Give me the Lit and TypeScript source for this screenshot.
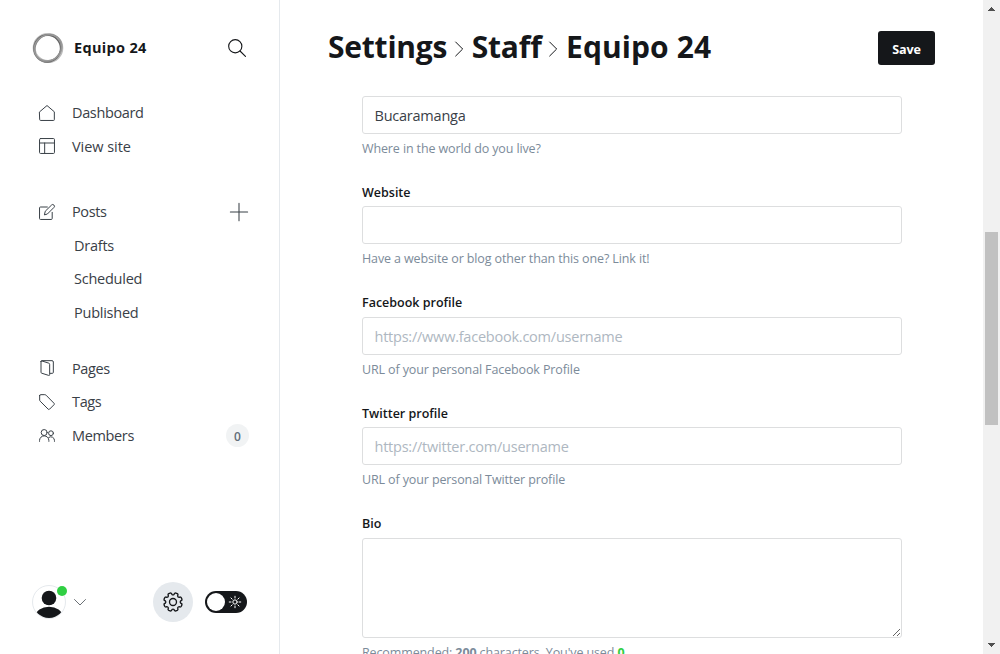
import { LitElement, html, svg, css, nothing } from "lit";
import { customElement } from "lit/decorators.js";

const cog = (() => {
  const pts: string[] = [];
  for (let i = 0; i < 8; i++) {
    const base = (i * Math.PI) / 4 + Math.PI / 8;
    const at = (r: number, a: number) => `${(12 + r * Math.sin(base + a)).toFixed(2)} ${(12 - r * Math.cos(base + a)).toFixed(2)}`;
    pts.push(`${i ? "L" : "M"}${at(9.2, -0.25)}Q${at(11.3, -0.23)} ${at(11.2, -0.08)}L${at(11.2, 0.08)}Q${at(11.3, 0.23)} ${at(9.2, 0.25)}Q${at(8.1, 0.3927)} ${at(9.2, 0.535)}`);
  }
  return pts.join("") + "Z";
})();

const icons: Record<string, unknown> = {
  home: svg`<path d="M1 10.2 12 .8l11 9.4V22a1.2 1.2 0 0 1-1.2 1.2H2.2A1.2 1.2 0 0 1 1 22z"/>`,
  layout: svg`<rect x=".8" y=".8" width="22.4" height="22.4" rx="1.5"/><path d="M.8 7.5h22.4M8.5 7.5v15.7"/>`,
  pen: svg`<path d="M12.5 4.5H2.2A1.4 1.4 0 0 0 .8 5.9v15.9a1.4 1.4 0 0 0 1.4 1.4h16.2a1.4 1.4 0 0 0 1.4-1.4V12.5M8.2 15.8l1.2-5L18.8 1.6a2.5 2.5 0 0 1 3.6 3.6L13 14.6z"/>`,
  pages: svg`<path d="M4.200 1h15.300a2 2 0 0 1 2 2v15.500a1.500 1.500 0 0 1-1.500 1.500h-3M3 2.200v16.300q0 1 1 1.300l10.500 3.300q1.500.4 1.500-1V6.500q0-1.300-1.200-1.700L4 1.300Q3 1 3 2.200z"/>`,
  tag: svg`<path d="M1 2.200V9q0 1 .8 1.800l12 12q1 1 2 0l6.800-6.800q1-1 0-2l-12-12.200Q9.800 1 8.700 1H2.200Q1 1 1 2.200z"/>`,
  members: svg`<circle cx="7.800" cy="8.300" r="4.500"/><circle cx="18" cy="9.300" r="3.600"/><path d="M.8 21.500v-1.200a7 7 0 0 1 14 0v1.200M14.500 15.700a5.500 5.500 0 0 1 8.700 4.500v1.300"/>`,
  plus: svg`<path d="M12 .5v23M.5 12h23"/>`,
  search: svg`<circle cx="9.700" cy="9.700" r="8.800"/><path d="m16 16 7.300 7.300"/>`,
  cog: svg`<circle cx="12" cy="12" r="4.200"/><path d=${cog}/>`,
  sun: svg`<circle cx="12" cy="12" r="4.300"/><path d="M12 .5v3.500M12 20v3.500M.5 12H4M20 12h3.500M3.900 3.900l2.400 2.400M17.700 17.700l2.400 2.400M3.900 20.100l2.400-2.400M17.700 6.300l2.400-2.400"/>`,
  right: svg`<path d="M7 1.500 17.500 12 7 22.500"/>`,
  down: svg`<path d="M1 7l11 11L23 7"/>`,
};

const icon = (name: string, cls = "") =>
  html`<svg class="icon ${cls}" viewBox="0 0 24 24" aria-hidden="true">${icons[name]}</svg>`;

@customElement("app-root")
export class AppRoot extends LitElement {
  static styles = css`
    :host { display: flex; height: 654px; overflow: hidden; background: #fff; color: #15171a; font-family: "Open Sans", "Noto Sans", sans-serif; }
    * { box-sizing: border-box; }
    .icon { display: block; width: 16px; height: 16px; fill: none; stroke: #394047; stroke-width: 1.5; stroke-linecap: round; stroke-linejoin: round; flex: none; overflow: visible; }
    .side { width: 280px; flex: none; border-right: 1px solid #e5e9ed; display: flex; flex-direction: column; }
    .brand { height: 96px; display: flex; align-items: center; padding: 0 33px 0 32px; }
    .logo { width: 32px; height: 32px; margin-right: 10px; fill: none; }
    .name { flex: 1; font-size: 14.5px; font-weight: 700; letter-spacing: 0.32px; padding-bottom: 2px; }
    .search { width: 18px; height: 18px; stroke: #15171a; stroke-width: 1.5; }
    .group { display: flex; flex-direction: column; margin-bottom: 32px; }
    .group.posts { margin-bottom: 22.5px; }
    .row { height: 33.5px; display: flex; align-items: center; padding: 0 31px 0 39px; font-size: 14.5px; letter-spacing: -0.36px; color: #394047; }
    .row .text { flex: 1; margin-left: 17px; }
    .row .wide { letter-spacing: -0.05px; }
    .sub { padding-left: 74px; }
    .sub .text { margin-left: 0; letter-spacing: -0.24px; }
    .plus { width: 18px; height: 18px; stroke-width: 1.4; }
    .count { width: 23px; height: 23px; margin-right: -1px; border-radius: 50%; background: #f1f3f4; display: grid; place-items: center; padding-top: 2px; font-size: 12px; font-weight: 600; letter-spacing: 0; color: #626d79; }
    .foot { margin-top: auto; height: 104px; padding: 0 32px; display: flex; align-items: center; }
    .avatar { width: 35px; height: 35px; flex: none; overflow: visible; }
    .down { width: 12px; height: 12px; margin-left: 7px; }
    .gear { width: 40px; height: 40px; margin-left: auto; border-radius: 50%; background: #e5e9ed; display: grid; place-items: center; }
    .cog { width: 20px; height: 20px; stroke: #15171a; stroke-width: 1.6; }
    .toggle { width: 42px; height: 22px; border-radius: 11px; background: #15171a; margin-left: 12px; padding: 0 6px 0 2px; display: flex; align-items: center; justify-content: space-between; }
    .knob { width: 18px; height: 18px; border-radius: 50%; background: #fff; }
    .sun { width: 12px; height: 12px; stroke: #fff; stroke-width: 2; }
    .main { flex: 1; min-width: 0; }
    .head { height: 96px; display: flex; align-items: center; padding: 0 48px; }
    .title { margin: 0; flex: 1; display: flex; align-items: center; padding-bottom: 3px; font-size: 30px; font-weight: 700; letter-spacing: -0.22px; white-space: nowrap; }
    .last { letter-spacing: 0.08px; }
    .chev { width: 16px; height: 16px; margin: 5px 5px 0 3.5px; stroke: #15171a; }
    .save { border: 0; border-radius: 3px; background: #15171a; color: #fff; width: 57px; height: 34px; font: 700 12.6px "Open Sans", sans-serif; letter-spacing: -0.1px; padding: 2px 0 0; }
    .form { padding: 0 81px 0 82px; }
    .field { margin-bottom: 16px; font-size: 12.5px; }
    .label { display: block; height: 28.4px; padding-top: 1px; line-height: 28.4px; font-weight: 600; letter-spacing: 0; }
    .help { height: 28px; line-height: 30px; color: #7c8b9a; letter-spacing: -0.12px; }
    .input { display: block; width: 540px; height: 38px; border: 1px solid #dddedf; border-radius: 3px; padding: 1px 11.5px 0; background: #fff; color: #394047; font: 400 14.5px "Open Sans", sans-serif; letter-spacing: -0.23px; outline: 0; }
    .input::placeholder { color: #aeb7c1; opacity: 1; }
    .area { height: 100px; }
    .used { color: #30cf43; }
    .bar { width: 17px; flex: none; background: #f1f1f1; display: flex; flex-direction: column; align-items: center; }
    .arrow { width: 17px; height: 17px; fill: #505050; }
    .thumb { width: 13px; height: 193px; margin-top: 215px; background: #c1c1c1; }
    .end { margin-top: auto; transform: scaleY(-1); }
  `;

  private row(name: string, label: string, extra: unknown = nothing) {
    return html`<div class="row">${icon(name)}<span class="text ${label === "View site" ? "wide" : ""}">${label}</span>${extra}</div>`;
  }

  private field(label: string, value: string, placeholder: string, help: string) {
    return html`<div class="field">
      ${label ? html`<label class="label">${label}</label>` : nothing}
      <input class="input" .value=${value} placeholder=${placeholder}>
      <div class="help">${help}</div>
    </div>`;
  }

  render() {
    const arrow = svg`<path d="M5 11h7v-1h-1V9h-1V8H9V7H8v1H7v1H6v1H5z"/>`;
    return html`
      <nav class="side">
        <div class="brand">
          <svg class="logo" viewBox="0 0 32 32">
            <ellipse cx="16" cy="16" rx="13.800" ry="13.600" stroke="#bbb" stroke-width="3"/>
            <ellipse cx="15.200" cy="16.500" rx="13.300" ry="13.500" stroke="#666" stroke-width="1.300"/>
            <ellipse cx="16" cy="16" rx="12.400" ry="14.200" stroke="#8a8a8a" stroke-width="1.300" transform="rotate(40 16 16)"/>
            <ellipse cx="16.200" cy="15.800" rx="14.200" ry="12.700" stroke="#999" stroke-width="1.100" transform="rotate(-25 16 16)"/>
          </svg>
          <span class="name">Equipo 24</span>${icon("search", "search")}
        </div>
        <div class="group">${this.row("home", "Dashboard")}${this.row("layout", "View site")}</div>
        <div class="group posts">
          ${this.row("pen", "Posts", icon("plus", "plus"))}
          ${["Drafts", "Scheduled", "Published"].map((t) => html`<div class="row sub"><span class="text">${t}</span></div>`)}
        </div>
        <div class="group">
          ${this.row("pages", "Pages")}${this.row("tag", "Tags")}
          ${this.row("members", "Members", html`<span class="count">0</span>`)}
        </div>
        <div class="foot">
          <svg class="avatar" viewBox="0 0 35 35">
            <defs><clipPath id="round"><circle cx="17" cy="17" r="16"/></clipPath></defs>
            <circle cx="17" cy="17" r="16.500" fill="#fff" stroke="#e5e9ed"/>
            <g clip-path="url(#round)" fill="#15171a"><circle cx="17" cy="13" r="7.300"/><ellipse cx="17" cy="31" rx="13.500" ry="9.300"/></g>
            <circle cx="30" cy="6" r="5" fill="#30cf43"/>
          </svg>
          ${icon("down", "down")}
          <div class="gear">${icon("cog", "cog")}</div>
          <div class="toggle"><span class="knob"></span>${icon("sun", "sun")}</div>
        </div>
      </nav>
      <main class="main">
        <header class="head">
          <h1 class="title"><span>Settings</span>${icon("right", "chev")}<span>Staff</span>${icon("right", "chev")}<span class="last">Equipo 24</span></h1>
          <button class="save">Save</button>
        </header>
        <div class="form">
          ${this.field("", "Bucaramanga", "", "Where in the world do you live?")}
          ${this.field("Website", "", "", "Have a website or blog other than this one? Link it!")}
          ${this.field("Facebook profile", "", "https://www.facebook.com/username", "URL of your personal Facebook Profile")}
          ${this.field("Twitter profile", "", "https://twitter.com/username", "URL of your personal Twitter profile")}
          <div class="field">
            <label class="label">Bio</label>
            <textarea class="input area"></textarea>
            <div class="help">Recommended: <b>200</b> characters. You've used <b class="used">0</b></div>
          </div>
        </div>
      </main>
      <div class="bar">
        <svg class="arrow" viewBox="0 0 17 17">${arrow}</svg>
        <div class="thumb"></div>
        <svg class="arrow end" viewBox="0 0 17 17">${arrow}</svg>
      </div>`;
  }
}
